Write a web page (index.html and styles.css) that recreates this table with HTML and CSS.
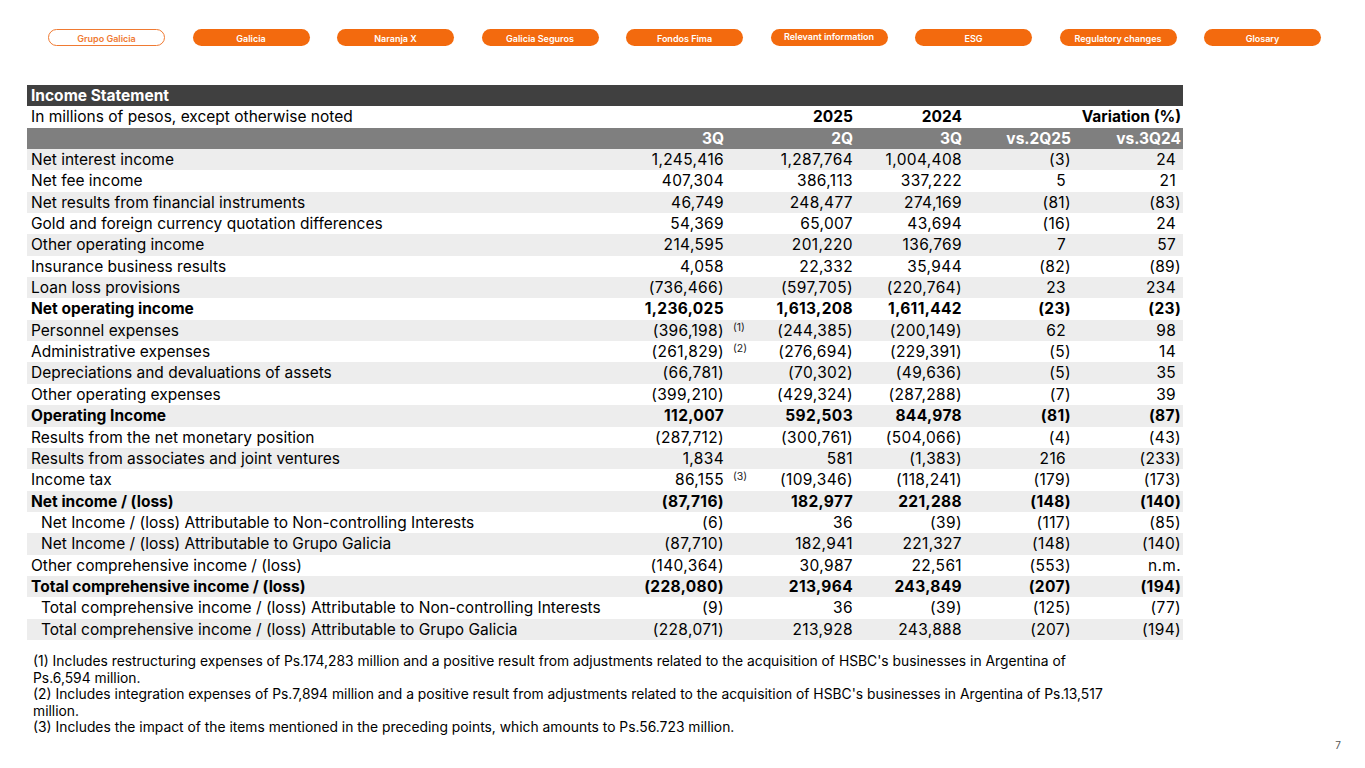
FILE: index.html
```html
<!DOCTYPE html>
<html lang="en">
<head>
<meta charset="utf-8">
<title>Income Statement</title>
<link rel="stylesheet" href="styles.css">
</head>
<body>
<div class="page">
  <nav class="nav">
    <a class="pill pill-outline">Grupo Galicia</a>
    <a class="pill">Galicia</a>
    <a class="pill">Naranja X</a>
    <a class="pill">Galicia Seguros</a>
    <a class="pill">Fondos Fima</a>
    <a class="pill pill-raised">Relevant information</a>
    <a class="pill">ESG</a>
    <a class="pill">Regulatory changes</a>
    <a class="pill">Glosary</a>
  </nav>

  <table class="is">
    <colgroup>
      <col class="c-label"><col class="c-n1"><col class="c-sup"><col class="c-n2"><col class="c-n3"><col class="c-v1"><col class="c-v2">
    </colgroup>
    <tr class="r-title"><td colspan="7">Income Statement</td></tr>
    <tr class="r-units"><td>In millions of pesos, except otherwise noted</td><td></td><td></td><td class="n b">2025</td><td class="n b">2024</td><td class="n b" colspan="2">Variation (%)</td></tr>
    <tr class="r-head"><td></td><td class="n">3Q</td><td></td><td class="n">2Q</td><td class="n">3Q</td><td class="n">vs.2Q25</td><td class="n">vs.3Q24</td></tr>

    <tr class="g"><td>Net interest income</td><td class="n">1,245,416</td><td></td><td class="n">1,287,764</td><td class="n">1,004,408</td><td class="n">(3)</td><td class="n p">24</td></tr>
    <tr><td>Net fee income</td><td class="n">407,304</td><td></td><td class="n">386,113</td><td class="n">337,222</td><td class="n p">5</td><td class="n p">21</td></tr>
    <tr class="g"><td>Net results from financial instruments</td><td class="n">46,749</td><td></td><td class="n">248,477</td><td class="n">274,169</td><td class="n">(81)</td><td class="n">(83)</td></tr>
    <tr><td>Gold and foreign currency quotation differences</td><td class="n">54,369</td><td></td><td class="n">65,007</td><td class="n">43,694</td><td class="n">(16)</td><td class="n p">24</td></tr>
    <tr class="g"><td>Other operating income</td><td class="n">214,595</td><td></td><td class="n">201,220</td><td class="n">136,769</td><td class="n p">7</td><td class="n p">57</td></tr>
    <tr><td>Insurance business results</td><td class="n">4,058</td><td></td><td class="n">22,332</td><td class="n">35,944</td><td class="n">(82)</td><td class="n">(89)</td></tr>
    <tr class="g"><td>Loan loss provisions</td><td class="n">(736,466)</td><td></td><td class="n">(597,705)</td><td class="n">(220,764)</td><td class="n p">23</td><td class="n p">234</td></tr>
    <tr class="bold"><td>Net operating income</td><td class="n">1,236,025</td><td></td><td class="n">1,613,208</td><td class="n">1,611,442</td><td class="n">(23)</td><td class="n">(23)</td></tr>
    <tr class="g"><td>Personnel expenses</td><td class="n">(396,198)</td><td class="sup">(1)</td><td class="n">(244,385)</td><td class="n">(200,149)</td><td class="n p">62</td><td class="n p">98</td></tr>
    <tr><td>Administrative expenses</td><td class="n">(261,829)</td><td class="sup">(2)</td><td class="n">(276,694)</td><td class="n">(229,391)</td><td class="n">(5)</td><td class="n p">14</td></tr>
    <tr class="g"><td>Depreciations and devaluations of assets</td><td class="n">(66,781)</td><td></td><td class="n">(70,302)</td><td class="n">(49,636)</td><td class="n">(5)</td><td class="n p">35</td></tr>
    <tr><td>Other operating expenses</td><td class="n">(399,210)</td><td></td><td class="n">(429,324)</td><td class="n">(287,288)</td><td class="n">(7)</td><td class="n p">39</td></tr>
    <tr class="g bold"><td>Operating Income</td><td class="n">112,007</td><td></td><td class="n">592,503</td><td class="n">844,978</td><td class="n">(81)</td><td class="n">(87)</td></tr>
    <tr><td>Results from the net monetary position</td><td class="n">(287,712)</td><td></td><td class="n">(300,761)</td><td class="n">(504,066)</td><td class="n">(4)</td><td class="n">(43)</td></tr>
    <tr class="g"><td>Results from associates and joint ventures</td><td class="n">1,834</td><td></td><td class="n">581</td><td class="n">(1,383)</td><td class="n p">216</td><td class="n">(233)</td></tr>
    <tr><td>Income tax</td><td class="n">86,155</td><td class="sup">(3)</td><td class="n">(109,346)</td><td class="n">(118,241)</td><td class="n">(179)</td><td class="n">(173)</td></tr>
    <tr class="g bold"><td>Net income / (loss)</td><td class="n">(87,716)</td><td></td><td class="n">182,977</td><td class="n">221,288</td><td class="n">(148)</td><td class="n">(140)</td></tr>
    <tr><td class="ind">Net Income / (loss) Attributable to Non-controlling Interests</td><td class="n">(6)</td><td></td><td class="n">36</td><td class="n">(39)</td><td class="n">(117)</td><td class="n">(85)</td></tr>
    <tr class="g"><td class="ind">Net Income / (loss) Attributable to Grupo Galicia</td><td class="n">(87,710)</td><td></td><td class="n">182,941</td><td class="n">221,327</td><td class="n">(148)</td><td class="n">(140)</td></tr>
    <tr><td>Other comprehensive income / (loss)</td><td class="n">(140,364)</td><td></td><td class="n">30,987</td><td class="n">22,561</td><td class="n">(553)</td><td class="n">n.m.</td></tr>
    <tr class="g bold"><td>Total comprehensive income / (loss)</td><td class="n">(228,080)</td><td></td><td class="n">213,964</td><td class="n">243,849</td><td class="n">(207)</td><td class="n">(194)</td></tr>
    <tr><td class="ind">Total comprehensive income / (loss) Attributable to Non-controlling Interests</td><td class="n">(9)</td><td></td><td class="n">36</td><td class="n">(39)</td><td class="n">(125)</td><td class="n">(77)</td></tr>
    <tr class="g"><td class="ind">Total comprehensive income / (loss) Attributable to Grupo Galicia</td><td class="n">(228,071)</td><td></td><td class="n">213,928</td><td class="n">243,888</td><td class="n">(207)</td><td class="n">(194)</td></tr>
  </table>

  <div class="notes">
    <p>(1) Includes restructuring expenses of Ps.174,283 million and a positive result from adjustments related to the acquisition of HSBC's businesses in Argentina of Ps.6,594 million.</p>
    <p>(2) Includes integration expenses of Ps.7,894 million and a positive result from adjustments related to the acquisition of HSBC's businesses in Argentina of Ps.13,517 million.</p>
    <p>(3) Includes the impact of the items mentioned in the preceding points, which amounts to Ps.56.723 million.</p>
  </div>

  <div class="pagenum">7</div>
</div>
</body>
</html>
```

FILE: styles.css
```css
* { box-sizing: border-box; }
html, body { margin: 0; padding: 0; background: #fff; }
body {
  font-family: Inter, "Noto Sans", "Liberation Sans", sans-serif;
  color: #000;
  width: 1365px;
  height: 768px;
  overflow: hidden;
}
.page {
  position: relative;
  width: 1365px;
  height: 768px;
  padding: 29px 0 0 27px;
}
.nav {
  display: flex;
  gap: 27.5px;
  padding-left: 21px;
  height: 17px;
}
.pill {
  flex: 0 0 117px;
  height: 17px;
  border-radius: 9px;
  background: #f36a0e;
  color: #fff;
  font-size: 9px;
  font-weight: 600;
  display: flex;
  align-items: center;
  justify-content: center;
  padding-top: 1px;
  text-decoration: none;
}
.pill-outline {
  background: #fff;
  color: #f07a32;
  border: 1px solid #f07a32;
}
.pill-raised { padding-top: 0; padding-bottom: 3px; }

.is {
  margin-top: 39px;
  border-collapse: collapse;
  table-layout: fixed;
  width: 1156px;
  font-size: 15.5px;
  line-height: 21.35px;
}
.c-label { width: 613px; }
.c-n1 { width: 86px; }
.c-sup { width: 30px; }
.c-n2 { width: 99px; }
.c-n3 { width: 109px; }
.c-v1 { width: 109px; }
.c-v2 { width: 110px; }
.is td {
  padding: 0 0 0 4px;
  height: 21.35px;
  white-space: nowrap;
  vertical-align: middle;
}
.is td.n {
  text-align: right;
  padding-right: 2px;
  letter-spacing: 0.35px;
}
.is .r-units td.n,
.is .r-head td.n { letter-spacing: 0; }
.is td.n.p { padding-right: 7px; }
.is td.ind { padding-left: 14px; }
.is td.sup {
  font-size: 10.5px;
  vertical-align: top;
  padding-left: 7px;
  line-height: 15px;
  color: #222;
}
.r-title td { background: #404040; color: #fff; font-weight: 700; }
.r-units td.b { font-weight: 700; }
.r-head td { background: #7f7f7f; color: #fff; font-weight: 700; }
tr.g td { background: #ededed; }
tr.bold td { font-weight: 700; }
tr.bold td.sup { font-weight: 400; }

.notes {
  margin-top: 13px;
  width: 1091px;
  padding-left: 6px;
  font-size: 13.85px;
  line-height: 16.6px;
}
.notes p { margin: 0; }
.pagenum {
  position: absolute;
  right: 24px;
  bottom: 17px;
  font-size: 10px;
  color: #555;
}
```
